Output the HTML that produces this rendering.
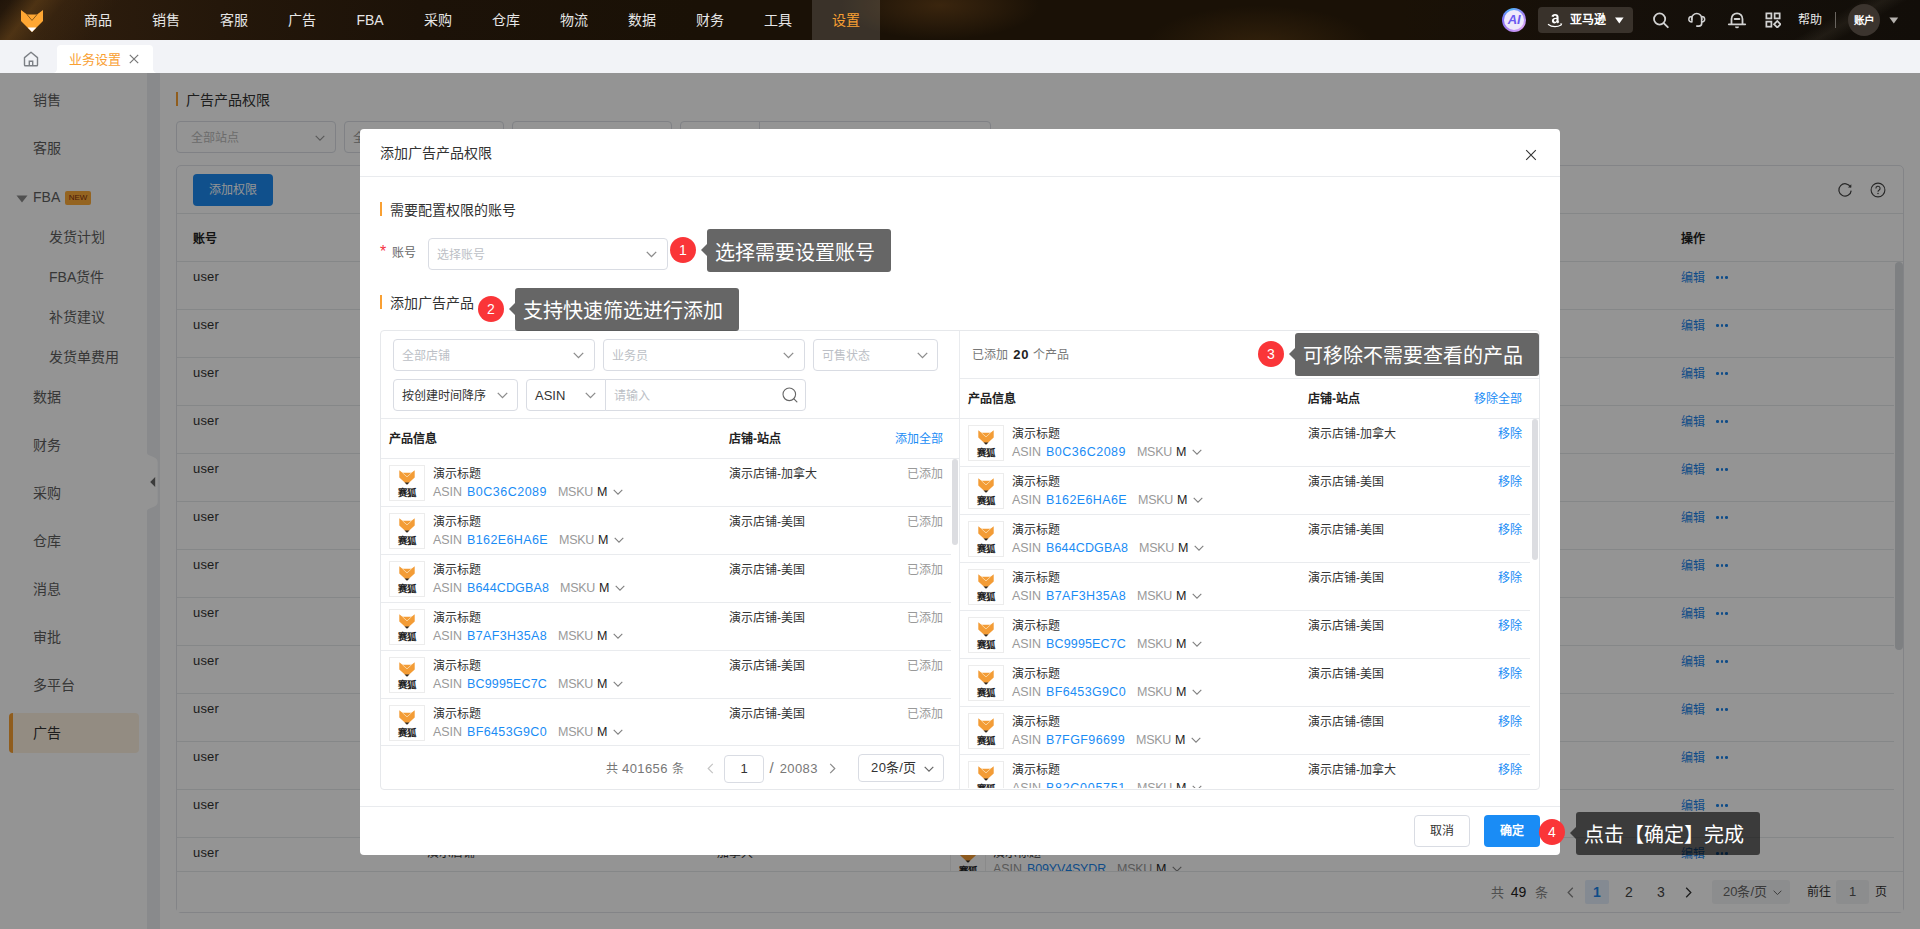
<!DOCTYPE html>
<html lang="zh-CN">
<head>
<meta charset="utf-8">
<title>业务设置</title>
<style>
*{box-sizing:border-box;margin:0;padding:0}
html,body{width:1920px;height:929px;overflow:hidden;background:#fff}
body{font-family:"Liberation Sans",sans-serif;font-size:12px;color:#333;position:relative}
svg{display:block}
.abs{position:absolute}
/* ---------- top nav ---------- */
#topnav{position:absolute;left:0;top:0;width:1920px;height:40px;background:linear-gradient(90deg,#2f1f0e 0,#2c1c0d 80px,#24170a 220px,#1c1208 420px,#1a1106 700px,#1a1106 1400px,#16100a 1600px,#120e09 1920px);overflow:hidden}
#topnav .glow1{position:absolute;left:0;top:0;width:140px;height:40px;background:linear-gradient(128deg,rgba(20,12,6,.55) 0,rgba(20,12,6,.35) 9px,rgba(110,72,26,.5) 30px,rgba(90,58,22,.22) 52px,rgba(60,40,16,0) 95px)}
#topnav .glow2{position:absolute;left:1130px;top:0;width:260px;height:40px;background:radial-gradient(ellipse at 50% 115%,rgba(70,46,16,.55) 0%,rgba(40,22,10,0) 62%)}
#topnav .glow3{position:absolute;left:840px;top:-20px;width:200px;height:60px;background:radial-gradient(ellipse at 50% 42%,rgba(66,42,16,.8) 0%,rgba(56,36,14,.55) 35%,rgba(40,22,10,0) 70%)}
#topnav .dark{display:none}
#topnav .streak{position:absolute;left:1740px;top:-30px;width:220px;height:100px;background:linear-gradient(150deg,rgba(255,255,255,0) 44%,rgba(255,235,200,.06) 50%,rgba(255,255,255,0) 56%)}
.nav-item{position:absolute;top:0;height:40px;width:68px;line-height:40px;text-align:center;font-size:14px;color:#e6e6e6;font-weight:500}
.nav-item.on{background:rgba(255,255,255,.14);color:#f9a033}
/* ---------- tab bar ---------- */
#tabbar{position:absolute;left:0;top:40px;width:1920px;height:33px;background:#f2f3f7}
#tab1{position:absolute;left:57px;top:5px;width:96px;height:28px;background:#fff;border-radius:4px 4px 0 0;color:#f9a033;font-size:13px;line-height:29px;padding-left:12px}
/* ---------- app (masked) ---------- */
#app{position:absolute;left:0;top:73px;width:1920px;height:856px;background:#f7f8fa;overflow:hidden}
#side{position:absolute;left:0;top:0;width:147px;height:856px;background:#fff}
#gap{position:absolute;left:147px;top:0;width:13px;height:856px;background:#eceef2}
.sm{position:absolute;left:33px;font-size:14px;color:#606060;line-height:20px;white-space:nowrap}
.sm.sub{left:49px}
#mask{position:absolute;left:0;top:73px;width:1920px;height:856px;background:rgba(0,0,0,.42)}
/* ---------- main ---------- */
#main{position:absolute;left:160px;top:0;width:1760px;height:856px;background:#fff}
.sel{position:absolute;height:32px;border:1px solid #dcdfe6;border-radius:4px;background:#fff;font-size:12px;line-height:32px;color:#bbb;padding-left:14px;white-space:nowrap;overflow:hidden}
#card{position:absolute;left:16px;top:92px;width:1728px;height:748px;border:1px solid #e2e4e8;border-radius:5px;background:#fff}
.hl{position:absolute;left:0;height:1px;background:#e6e8eb}
.u{position:absolute;left:16px;font-size:13px;color:#333;line-height:16px}
.ed{position:absolute;left:1504px;font-size:12px;color:#1a84ea;line-height:16px;white-space:nowrap}
.dots{position:absolute;left:1539px;width:12px;height:3px}
.dots i{position:absolute;top:0;width:2.600px;height:2.600px;border-radius:50%;background:#1a84ea}
/* ---------- modal ---------- */
#modal{position:absolute;left:360px;top:129px;width:1200px;height:726px;background:#fff;border-radius:4px}
.msel{position:absolute;height:32px;border:1px solid #d9dce3;border-radius:4px;background:#fff;font-size:12px;line-height:32px;color:#bcbfc6;padding-left:8px;white-space:nowrap}
.msel.v{color:#333}
.bar{position:absolute;left:20px;width:2px;height:14px;background:#f9a033}
.sec{position:absolute;left:30px;font-size:14px;line-height:20px;color:#333}
#panel{position:absolute;left:20px;top:201px;width:1160px;height:460px;border:1px solid #e6e8eb;border-radius:4px}
.pl{position:absolute;height:1px;background:#e9ebee}
.th{position:absolute;font-size:12px;font-weight:700;color:#222;line-height:16px;white-space:nowrap}
.lnk{color:#1a8cf5}
.row{position:absolute;height:48px}
.img{position:absolute;left:8px;top:6px;width:36px;height:36px;border:1px solid #ececec;background:#fff}
.t1{position:absolute;left:52px;top:7px;font-size:12px;line-height:16px;color:#333;white-space:nowrap}
.t2{position:absolute;left:52px;top:25px;font-size:13px;line-height:16px;color:#999;white-space:nowrap}
.t2 b{font-weight:400;color:#1a8cf5;margin-left:5px}
.t2 i{font-style:normal;margin-left:11px}
.t2 em{font-style:normal;color:#222;margin-left:4px}
.st{position:absolute;top:7px;font-size:12px;line-height:16px;color:#333;white-space:nowrap}
.ac{position:absolute;top:7px;font-size:12px;line-height:16px;white-space:nowrap;text-align:right}
/* ---------- guide ---------- */
.bd{position:absolute;width:26px;height:26px;border-radius:50%;background:#fa3538;color:#fff;font-size:14px;line-height:26px;text-align:center}
.tip{position:absolute;background:rgba(0,0,0,.6);border-radius:3px;color:#fff;font-size:20px;white-space:nowrap;padding-left:8px;overflow:visible}
.tip:before{content:"";position:absolute;left:-6px;top:50%;margin-top:-7px;border:6px solid transparent;border-left:0;border-right:6px solid rgba(0,0,0,.6)}
</style>
</head>
<body>
<svg width="0" height="0" style="position:absolute"><defs>
<g id="fox"><path d="M9.300 4.200 L12.400 6.700 L21.600 6.700 L24.700 4.200 L24.700 11.600 L17 18.600 L9.300 11.600 Z" fill="#f39c36"/><path d="M12.400 6.700 L17 10.900 L21.600 6.700" fill="none" stroke="#fbd9a8" stroke-width=".9"/><path d="M14.500 16.400 L19.500 16.400 L17 18.800 Z" fill="#2b2b2b"/><text x="17" y="30" text-anchor="middle" font-size="9.400" font-weight="700" fill="#222" font-family="'Liberation Sans',sans-serif" letter-spacing="-.3">赛狐</text></g>
</defs></svg>
<div id="topnav">
  <div class="glow1"></div><div class="glow2"></div><div class="glow3"></div><div class="streak"></div>
  <svg class="abs" style="left:18px;top:6px" width="28" height="28" viewBox="0 0 28 28"><path d="M3 4 L9 8.600 L19 8.600 L25 4 L25 15 L14 26 L3 15 Z" fill="#ffa733"/><path d="M9 8.600 L14 14.400 L19 8.600" fill="none" stroke="#6b4514" stroke-width="0.8"/><path d="M9.600 21.600 L18.400 21.600 L14 26 Z" fill="#fff"/></svg>
  <div class="nav-item" style="left:64px">商品</div><div class="nav-item" style="left:132px">销售</div><div class="nav-item" style="left:200px">客服</div><div class="nav-item" style="left:268px">广告</div><div class="nav-item" style="left:336px">FBA</div><div class="nav-item" style="left:404px">采购</div><div class="nav-item" style="left:472px">仓库</div><div class="nav-item" style="left:540px">物流</div><div class="nav-item" style="left:608px">数据</div><div class="nav-item" style="left:676px">财务</div><div class="nav-item" style="left:744px">工具</div><div class="nav-item on" style="left:812px">设置</div>
  <div class="abs" style="left:1502px;top:8px;width:24px;height:24px;border-radius:50%;background:conic-gradient(from 200deg,#b98cf5,#7f6cf6,#4fb4fa,#9d83f7,#d9a3f5,#b98cf5)"></div>
  <div class="abs" style="left:1504px;top:10px;width:20px;height:20px;border-radius:50%;background:#eee9fb"></div>
  <div class="abs" style="left:1502px;top:8px;width:24px;height:24px;line-height:24px;text-align:center;font-size:13px;font-weight:700;font-style:italic;color:#6a5af0;letter-spacing:-0.3px">AI</div>
  <div class="abs" style="left:1538px;top:7px;width:95px;height:26px;border-radius:4px;background:#39322b"></div>
  <svg class="abs" style="left:1547px;top:12px" width="16" height="16" viewBox="0 0 16 16"><path d="M9.500 5.800c-1.700.100-4.600.500-4.600 3.100 0 1.600 1.200 2.500 2.500 2.500 1.100 0 1.800-.400 2.400-1.100.300.500.400.700.900 1.100l1.600-1.300c-.4-.5-.7-.9-.7-1.800V4.900c0-1.800-1.300-3-3.500-3-2.100 0-3.400 1.100-3.600 2.700l2.200.3c.1-.8.600-1.200 1.400-1.200.8 0 1.400.4 1.400 1.300zm0 2.100c0 1.100-.7 1.800-1.500 1.800-.6 0-1-.4-1-1.100 0-1.300 1.200-1.600 2.500-1.600z" fill="#fff"/><path d="M1 12.200c2 1.600 4.500 2.400 7 2.400 2.100 0 4.300-.6 6-1.700" fill="none" stroke="#fff" stroke-width="1.200"/><path d="M13 12.100l1.800-.3-.7 1.700" fill="none" stroke="#fff" stroke-width=".9"/></svg>
  <div class="abs" style="left:1570px;top:7px;height:26px;line-height:26px;font-size:12px;font-weight:700;color:#fff">亚马逊</div>
  <svg class="abs" style="left:1615px;top:17px" width="9" height="7" viewBox="0 0 9 7"><path d="M0 .5h8.600L4.300 6.500z" fill="#fff"/></svg>
  <svg class="abs" style="left:1650px;top:10px" width="21" height="21" viewBox="0 0 21 21"><circle cx="9.600" cy="9" r="5.600" fill="none" stroke="#d2d2d2" stroke-width="1.800"/><path d="M13.700 13.100L17.800 17.200" stroke="#d2d2d2" stroke-width="1.900" stroke-linecap="round"/></svg>
  <svg class="abs" style="left:1687px;top:11px" width="19.500" height="17.700" viewBox="0 0 22 20"><path d="M5.300 10.500V8.500a5.700 5.700 0 0 1 11.400 0v2" fill="none" stroke="#d2d2d2" stroke-width="1.800"/><path d="M5.600 6.300C3.400 6.300 2 7.700 2 9.400s1.400 3.100 3.600 3.100z" fill="none" stroke="#d2d2d2" stroke-width="1.600" stroke-linejoin="round"/><path d="M16.400 6.300c2.200 0 3.600 1.400 3.600 3.100s-1.400 3.100-3.600 3.100z" fill="none" stroke="#d2d2d2" stroke-width="1.600" stroke-linejoin="round"/><path d="M16.600 12.500v1.300c0 2-1.300 3.300-3.300 3.300H11" fill="none" stroke="#d2d2d2" stroke-width="1.800" stroke-linecap="round"/></svg>
  <svg class="abs" style="left:1727px;top:11px" width="20" height="18" viewBox="0 0 20 18"><path d="M4.500 13V8a5.500 5.700 0 0 1 11 0v5" fill="none" stroke="#d2d2d2" stroke-width="1.800"/><path d="M1.800 13.300h16.400" stroke="#d2d2d2" stroke-width="1.800" stroke-linecap="round"/><path d="M7.600 8h4.800" stroke="#d2d2d2" stroke-width="1.800" stroke-linecap="round"/><path d="M8 15.400a2 1.900 0 0 0 4 0z" fill="#d2d2d2"/></svg>
  <svg class="abs" style="left:1764.500px;top:11.500px" width="16.500" height="16.500" viewBox="0 0 18 18"><rect x="1.500" y="1.500" width="5.500" height="5.500" fill="none" stroke="#d2d2d2" stroke-width="1.900"/><rect x="10.500" y="1.500" width="5.500" height="5.500" fill="none" stroke="#d2d2d2" stroke-width="1.900"/><rect x="1.500" y="10.500" width="5.500" height="5.500" fill="none" stroke="#d2d2d2" stroke-width="1.900"/><rect x="10.900" y="10.900" width="5" height="5" transform="rotate(45 13.400 13.400)" fill="none" stroke="#d2d2d2" stroke-width="1.900"/></svg>
  <div class="abs" style="left:1798px;top:0;height:40px;line-height:41px;font-size:12px;color:#e8e8e8;font-weight:500">帮助</div>
  <div class="abs" style="left:1835px;top:12px;width:1px;height:16px;background:#6a6560"></div>
  <div class="abs" style="left:1848px;top:4px;width:32px;height:32px;border-radius:50%;background:#3b342e;color:#fff;font-size:10.500px;font-weight:700;text-align:center;line-height:33px">账户</div>
  <svg class="abs" style="left:1889px;top:17px" width="10" height="7" viewBox="0 0 10 7"><path d="M.4.400h8.800L4.800 6.400z" fill="#b5b2ae"/></svg>
</div>
<div id="tabbar">
  <svg class="abs" style="left:22px;top:10px" width="18" height="18" viewBox="0 0 18 18"><path d="M2.500 7.600L9 2.300l6.500 5.300V15a.8.800 0 0 1-.8.800H3.300a.8.800 0 0 1-.8-.8z" fill="none" stroke="#7d8086" stroke-width="1.400" stroke-linejoin="round"/><path d="M7.300 15.600v-4.400h3.400v4.400" fill="none" stroke="#7d8086" stroke-width="1.400"/></svg>
  <div id="tab1">业务设置</div>
  <div class="abs" style="left:53px;top:29px;width:4px;height:4px;background:radial-gradient(circle at 0 0,rgba(255,255,255,0) 3.500px,#fff 4.200px)"></div>
  <div class="abs" style="left:153px;top:29px;width:4px;height:4px;background:radial-gradient(circle at 100% 0,rgba(255,255,255,0) 3.500px,#fff 4.200px)"></div>
  <svg class="abs" style="left:128px;top:13px" width="12" height="12" viewBox="0 0 12 12"><path d="M1.800 1.800l8.400 8.400M10.200 1.800l-8.400 8.400" stroke="#777" stroke-width="1.200"/></svg>
</div>
<div id="app">
  <div id="side">
    <div class="abs" style="left:9px;top:640px;width:130px;height:40px;border-radius:4px;background:#fdf1e1"></div><div class="abs" style="left:9px;top:640px;width:4px;height:40px;border-radius:4px 0 0 4px;background:#f9a033"></div>
    <div class="sm" style="top:17px">销售</div>
    <div class="sm" style="top:65px">客服</div>
    <div class="sm" style="top:114px">FBA</div>
    <div class="sm sub" style="top:154px">发货计划</div>
    <div class="sm sub" style="top:194px">FBA货件</div>
    <div class="sm sub" style="top:234px">补货建议</div>
    <div class="sm sub" style="top:274px">发货单费用</div>
    <div class="sm" style="top:314px">数据</div>
    <div class="sm" style="top:362px">财务</div>
    <div class="sm" style="top:410px">采购</div>
    <div class="sm" style="top:458px">仓库</div>
    <div class="sm" style="top:506px">消息</div>
    <div class="sm" style="top:554px">审批</div>
    <div class="sm" style="top:602px">多平台</div>
    <div class="sm" style="top:650px;color:#333">广告</div>
    <svg class="abs" style="left:16px;top:122px" width="12" height="8" viewBox="0 0 12 8"><path d="M.5.500h11L6 7.500z" fill="#8a8a8a"/></svg>
    <div class="abs" style="left:65px;top:118px;width:26px;height:14px;border-radius:2px;background:#ffad3a;color:#86300a;font-size:8px;line-height:14.500px;text-align:center;font-weight:500;letter-spacing:-.1px">NEW</div>
  </div>
  <div id="gap"><svg class="abs" style="left:0;top:380px" width="11" height="58" viewBox="0 0 11 58"><path d="M0 0 C0 3.500 10.700 3 10.700 9 L10.700 49 C10.700 55 0 54.500 0 58 Z" fill="#fff"/></svg><svg class="abs" style="left:3px;top:404px" width="6" height="10" viewBox="0 0 6 10"><path d="M5.200 0v10L.2 5z" fill="#666"/></svg></div>
  <div id="main">
    <div class="abs" style="left:16px;top:19px;width:2px;height:14px;background:#f9a033"></div>
    <div class="abs" style="left:26px;top:17px;font-size:14px;line-height:20px;color:#333">广告产品权限</div>
    <div class="sel" style="left:16px;top:48px;width:160px">全部站点</div><svg class="abs" style="left:155px;top:62px" width="10" height="6.0" viewBox="0 0 10 6"><path d="M.7.800L5 5.100l4.300-4.300" fill="none" stroke="#999" stroke-width="1.1"/></svg>
    <div class="sel" style="left:184px;top:48px;width:160px;padding-left:8px;color:#999">全部店铺</div>
    <div class="sel" style="left:352px;top:48px;width:160px"></div>
    <div class="sel" style="left:520px;top:48px;width:311px"></div>
    <div class="abs" style="left:599px;top:49px;width:1px;height:30px;background:#dcdfe6"></div>
    <div id="card">
      <div class="abs" style="left:16px;top:8px;width:80px;height:32px;border-radius:4px;background:#1c8bf2;color:#fff;font-size:12px;line-height:32px;text-align:center">添加权限</div>
      <svg class="abs" style="left:1660px;top:16px" width="16" height="16" viewBox="0 0 16 16"><path d="M13.600 5.200A6.200 6.200 0 1 0 14.200 8.600" fill="none" stroke="#444" stroke-width="1.200"/><path d="M14.300 2.200v3.400h-3.400z" fill="#444"/></svg>
      <svg class="abs" style="left:1693px;top:16px" width="16" height="16" viewBox="0 0 16 16"><circle cx="8" cy="8" r="6.900" fill="none" stroke="#444" stroke-width="1.100"/><path d="M5.900 6.400a2.100 2.100 0 1 1 3.100 1.800c-.7.400-1 .8-1 1.500" fill="none" stroke="#444" stroke-width="1.100"/><circle cx="8" cy="11.500" r=".75" fill="#444"/></svg>
      <div class="hl" style="top:47px;width:1726px"></div>
      <div class="abs" style="left:16px;top:64.500px;font-size:12px;font-weight:700;color:#222;line-height:16px">账号</div>
      <div class="abs" style="left:1504px;top:64.500px;font-size:12px;font-weight:700;color:#222;line-height:16px">操作</div>
      <div class="hl" style="top:95px;width:1726px"></div>
      <div class="u" style="top:103px"><span style="font-size:13px;letter-spacing:0.18px;">user</span></div><div class="ed" style="top:103.5px">编辑</div><div class="dots" style="top:110px"><i style="left:0"></i><i style="left:4.700px"></i><i style="left:9.400px"></i></div><div class="hl" style="top:143px;width:1717px"></div>
      <div class="u" style="top:151px"><span style="font-size:13px;letter-spacing:0.18px;">user</span></div><div class="ed" style="top:151.5px">编辑</div><div class="dots" style="top:158px"><i style="left:0"></i><i style="left:4.700px"></i><i style="left:9.400px"></i></div><div class="hl" style="top:191px;width:1717px"></div>
      <div class="u" style="top:199px"><span style="font-size:13px;letter-spacing:0.18px;">user</span></div><div class="ed" style="top:199.5px">编辑</div><div class="dots" style="top:206px"><i style="left:0"></i><i style="left:4.700px"></i><i style="left:9.400px"></i></div><div class="hl" style="top:239px;width:1717px"></div>
      <div class="u" style="top:247px"><span style="font-size:13px;letter-spacing:0.18px;">user</span></div><div class="ed" style="top:247.5px">编辑</div><div class="dots" style="top:254px"><i style="left:0"></i><i style="left:4.700px"></i><i style="left:9.400px"></i></div><div class="hl" style="top:287px;width:1717px"></div>
      <div class="u" style="top:295px"><span style="font-size:13px;letter-spacing:0.18px;">user</span></div><div class="ed" style="top:295.5px">编辑</div><div class="dots" style="top:302px"><i style="left:0"></i><i style="left:4.700px"></i><i style="left:9.400px"></i></div><div class="hl" style="top:335px;width:1717px"></div>
      <div class="u" style="top:343px"><span style="font-size:13px;letter-spacing:0.18px;">user</span></div><div class="ed" style="top:343.5px">编辑</div><div class="dots" style="top:350px"><i style="left:0"></i><i style="left:4.700px"></i><i style="left:9.400px"></i></div><div class="hl" style="top:383px;width:1717px"></div>
      <div class="u" style="top:391px"><span style="font-size:13px;letter-spacing:0.18px;">user</span></div><div class="ed" style="top:391.5px">编辑</div><div class="dots" style="top:398px"><i style="left:0"></i><i style="left:4.700px"></i><i style="left:9.400px"></i></div><div class="hl" style="top:431px;width:1717px"></div>
      <div class="u" style="top:439px"><span style="font-size:13px;letter-spacing:0.18px;">user</span></div><div class="ed" style="top:439.5px">编辑</div><div class="dots" style="top:446px"><i style="left:0"></i><i style="left:4.700px"></i><i style="left:9.400px"></i></div><div class="hl" style="top:479px;width:1717px"></div>
      <div class="u" style="top:487px"><span style="font-size:13px;letter-spacing:0.18px;">user</span></div><div class="ed" style="top:487.5px">编辑</div><div class="dots" style="top:494px"><i style="left:0"></i><i style="left:4.700px"></i><i style="left:9.400px"></i></div><div class="hl" style="top:527px;width:1717px"></div>
      <div class="u" style="top:535px"><span style="font-size:13px;letter-spacing:0.18px;">user</span></div><div class="ed" style="top:535.5px">编辑</div><div class="dots" style="top:542px"><i style="left:0"></i><i style="left:4.700px"></i><i style="left:9.400px"></i></div><div class="hl" style="top:575px;width:1717px"></div>
      <div class="u" style="top:583px"><span style="font-size:13px;letter-spacing:0.18px;">user</span></div><div class="ed" style="top:583.5px">编辑</div><div class="dots" style="top:590px"><i style="left:0"></i><i style="left:4.700px"></i><i style="left:9.400px"></i></div><div class="hl" style="top:623px;width:1717px"></div>
      <div class="u" style="top:631px"><span style="font-size:13px;letter-spacing:0.18px;">user</span></div><div class="ed" style="top:631.5px">编辑</div><div class="dots" style="top:638px"><i style="left:0"></i><i style="left:4.700px"></i><i style="left:9.400px"></i></div><div class="hl" style="top:671px;width:1717px"></div>
      <div class="u" style="top:679px"><span style="font-size:13px;letter-spacing:0.18px;">user</span></div><div class="ed" style="top:679.5px">编辑</div><div class="dots" style="top:686px"><i style="left:0"></i><i style="left:4.700px"></i><i style="left:9.400px"></i></div>
      <div class="abs" style="left:250px;top:679px;font-size:12px;color:#333;line-height:16px">演示店铺</div>
      <div class="abs" style="left:540px;top:679px;font-size:12px;color:#333;line-height:16px">加拿大</div>
      <div class="abs" style="left:773px;top:677px;width:36px;height:28px;border:1px solid #eee;border-bottom:0;overflow:hidden"><svg width="34" height="34" viewBox="0 0 34 34"><use href="#fox"/></svg></div>
      <div class="abs" style="left:816px;top:679px;font-size:12px;color:#333;line-height:16px">演示标题</div>
      <div class="abs" style="left:816px;top:695px;font-size:13px;color:#999;line-height:16px;height:10px;overflow:hidden;white-space:nowrap"><span style="font-size:12.5px;letter-spacing:-0.04px;">ASIN</span><span style="color:#1a84ea;margin-left:5px"><span style="font-size:12.5px;letter-spacing:-0.16px;">B09YV4SYDR</span></span><span style="margin-left:11px"><span style="font-size:12.5px;letter-spacing:-0.28px;">MSKU</span></span><span style="color:#222;margin-left:4px"><span style="font-size:12.5px;letter-spacing:-0.41px;">M</span></span><svg style="display:inline-block;margin-left:6px;vertical-align:1px" width="10" height="6" viewBox="0 0 10 6"><path d="M.7.800L5 5.100l4.300-4.300" fill="none" stroke="#808080" stroke-width="1.100"/></svg></div>
      <div class="abs" style="left:0;top:705px;width:1726px;height:41px;background:#fff"></div>
      <div class="hl" style="top:705px;width:1726px"></div>
      <div class="abs" style="left:1718px;top:96px;width:8px;height:388px;border-radius:4px;background:#d9dce1"></div>
      <div class="abs" style="left:1314px;top:718px;font-size:13px;color:#888;line-height:16px;white-space:nowrap">共 <span style="color:#222;margin:0 5px 0 3px"><span style="font-size:14px;letter-spacing:0.21px;">49</span></span> 条</div>
      <svg class="abs" style="left:1390px;top:721px" width="7" height="11" viewBox="0 0 7 11"><path d="M5.800.800L1.200 5.500l4.600 4.700" fill="none" stroke="#888" stroke-width="1.300"/></svg>
      <div class="abs" style="left:1408px;top:714px;width:24px;height:24px;background:#e3eefb;border-radius:2px;color:#1a84ea;font-size:14px;font-weight:700;line-height:24px;text-align:center">1</div>
      <div class="abs" style="left:1440px;top:714px;width:24px;height:24px;color:#444;font-size:14px;line-height:24px;text-align:center">2</div>
      <div class="abs" style="left:1472px;top:714px;width:24px;height:24px;color:#444;font-size:14px;line-height:24px;text-align:center">3</div>
      <svg class="abs" style="left:1508px;top:721px" width="7" height="11" viewBox="0 0 7 11"><path d="M1.200.800L5.800 5.500l-4.600 4.700" fill="none" stroke="#333" stroke-width="1.300"/></svg>
      <div class="abs" style="left:1535px;top:714px;width:78px;height:24px;background:#f2f3f5;border-radius:3px;color:#666;font-size:13px;line-height:24px;padding-left:11px">20条/页</div>
      <svg class="abs" style="left:1596px;top:724px" width="9" height="5.4" viewBox="0 0 10 6"><path d="M.7.800L5 5.100l4.300-4.300" fill="none" stroke="#666" stroke-width="1.1"/></svg>
      <div class="abs" style="left:1630px;top:714px;font-size:12px;color:#333;line-height:24px">前往</div>
      <div class="abs" style="left:1659px;top:714px;width:33px;height:24px;background:#f2f3f5;border-radius:3px;color:#555;font-size:13px;line-height:24px;text-align:center">1</div>
      <div class="abs" style="left:1698px;top:714px;font-size:12px;color:#333;line-height:24px">页</div>
    </div>
  </div>
</div>
<div id="mask"></div>
<div id="modal">
  <div class="abs" style="left:20px;top:14px;font-size:14px;line-height:20px;color:#333">添加广告产品权限</div>
  <svg class="abs" style="left:1165px;top:20px" width="12" height="12" viewBox="0 0 12 12"><path d="M1.200 1.200l9.600 9.600M10.800 1.200l-9.600 9.600" stroke="#333" stroke-width="1.100"/></svg>
  <div class="pl" style="left:0;top:47px;width:1200px"></div>
  <div class="bar" style="top:73px"></div><div class="sec" style="top:71px">需要配置权限的账号</div>
  <div class="abs" style="left:20px;top:115px;font-size:16px;color:#f5333f;line-height:16px">*</div>
  <div class="abs" style="left:32px;top:116px;font-size:12px;color:#666;line-height:16px">账号</div>
  <div class="msel" style="left:68px;top:109px;width:240px">选择账号</div><svg class="abs" style="left:286px;top:122px" width="11" height="6.6" viewBox="0 0 10 6"><path d="M.7.800L5 5.100l4.300-4.300" fill="none" stroke="#8c8c8c" stroke-width="1.2"/></svg>
  <div class="bar" style="top:166px"></div><div class="sec" style="top:164px">添加广告产品</div>
  <div id="panel">
    <div class="abs" style="left:0;top:1px;width:578px;height:456px;overflow:hidden"><div class="msel" style="left:12px;top:7px;width:202px">全部店铺</div><svg class="abs" style="left:192px;top:20px" width="11" height="6.6" viewBox="0 0 10 6"><path d="M.7.800L5 5.100l4.300-4.300" fill="none" stroke="#8c8c8c" stroke-width="1.2"/></svg><div class="msel" style="left:222px;top:7px;width:202px">业务员</div><svg class="abs" style="left:402px;top:20px" width="11" height="6.6" viewBox="0 0 10 6"><path d="M.7.800L5 5.100l4.300-4.300" fill="none" stroke="#8c8c8c" stroke-width="1.2"/></svg><div class="msel" style="left:432px;top:7px;width:125px">可售状态</div><svg class="abs" style="left:536px;top:20px" width="11" height="6.6" viewBox="0 0 10 6"><path d="M.7.800L5 5.100l4.300-4.300" fill="none" stroke="#8c8c8c" stroke-width="1.2"/></svg><div class="msel v" style="left:12px;top:47px;width:125px">按创建时间降序</div><svg class="abs" style="left:116px;top:60px" width="11" height="6.6" viewBox="0 0 10 6"><path d="M.7.800L5 5.100l4.300-4.300" fill="none" stroke="#8c8c8c" stroke-width="1.2"/></svg><div class="msel v" style="left:145px;top:47px;width:80px;border-radius:4px 0 0 4px;font-size:13px">ASIN</div><svg class="abs" style="left:204px;top:60px" width="11" height="6.6" viewBox="0 0 10 6"><path d="M.7.800L5 5.100l4.300-4.300" fill="none" stroke="#8c8c8c" stroke-width="1.2"/></svg><div class="msel" style="left:224px;top:47px;width:201px;border-radius:0 4px 4px 0">请输入</div><svg class="abs" style="left:400px;top:54px" width="18" height="18" viewBox="0 0 18 18"><circle cx="8.300" cy="8.300" r="6.300" fill="none" stroke="#666" stroke-width="1.100"/><path d="M12.900 12.900l3 3" stroke="#666" stroke-width="1.200" stroke-linecap="round"/></svg><div class="pl" style="left:0;top:86px;width:578px"></div><div class="th" style="left:8px;top:99px">产品信息</div><div class="th" style="left:348px;top:99px">店铺-站点</div><div class="th lnk" style="right:16px;top:99px;font-weight:400">添加全部</div><div class="pl" style="left:0;top:126px;width:578px"></div>
<div class="row" style="left:0;top:127px;width:570px"><div class="img"><svg width="34" height="34" viewBox="0 0 34 34"><use href="#fox"/></svg></div><div class="t1">演示标题</div><div class="t2"><span style="font-size:12.5px;letter-spacing:-0.04px;">ASIN</span><b><span style="font-size:12.5px;letter-spacing:0.49px;">B0C36C2089</span></b><i><span style="font-size:12.5px;letter-spacing:-0.28px;">MSKU</span></i><em><span style="font-size:12.5px;letter-spacing:-0.41px;">M</span></em><svg style="display:inline-block;margin-left:6px;vertical-align:1px" width="10" height="6" viewBox="0 0 10 6"><path d="M.7.800L5 5.100l4.300-4.300" fill="none" stroke="#808080" stroke-width="1.100"/></svg></div><div class="st" style="left:348px">演示店铺-加拿大</div><div class="ac" style="right:8px;color:#999">已添加</div><div class="pl" style="left:0;top:47px;width:570px"></div></div>
<div class="row" style="left:0;top:175px;width:570px"><div class="img"><svg width="34" height="34" viewBox="0 0 34 34"><use href="#fox"/></svg></div><div class="t1">演示标题</div><div class="t2"><span style="font-size:12.5px;letter-spacing:-0.04px;">ASIN</span><b><span style="font-size:12.5px;letter-spacing:0.39px;">B162E6HA6E</span></b><i><span style="font-size:12.5px;letter-spacing:-0.28px;">MSKU</span></i><em><span style="font-size:12.5px;letter-spacing:-0.41px;">M</span></em><svg style="display:inline-block;margin-left:6px;vertical-align:1px" width="10" height="6" viewBox="0 0 10 6"><path d="M.7.800L5 5.100l4.300-4.300" fill="none" stroke="#808080" stroke-width="1.100"/></svg></div><div class="st" style="left:348px">演示店铺-美国</div><div class="ac" style="right:8px;color:#999">已添加</div><div class="pl" style="left:0;top:47px;width:570px"></div></div>
<div class="row" style="left:0;top:223px;width:570px"><div class="img"><svg width="34" height="34" viewBox="0 0 34 34"><use href="#fox"/></svg></div><div class="t1">演示标题</div><div class="t2"><span style="font-size:12.5px;letter-spacing:-0.04px;">ASIN</span><b><span style="font-size:12.5px;letter-spacing:0.14px;">B644CDGBA8</span></b><i><span style="font-size:12.5px;letter-spacing:-0.28px;">MSKU</span></i><em><span style="font-size:12.5px;letter-spacing:-0.41px;">M</span></em><svg style="display:inline-block;margin-left:6px;vertical-align:1px" width="10" height="6" viewBox="0 0 10 6"><path d="M.7.800L5 5.100l4.300-4.300" fill="none" stroke="#808080" stroke-width="1.100"/></svg></div><div class="st" style="left:348px">演示店铺-美国</div><div class="ac" style="right:8px;color:#999">已添加</div><div class="pl" style="left:0;top:47px;width:570px"></div></div>
<div class="row" style="left:0;top:271px;width:570px"><div class="img"><svg width="34" height="34" viewBox="0 0 34 34"><use href="#fox"/></svg></div><div class="t1">演示标题</div><div class="t2"><span style="font-size:12.5px;letter-spacing:-0.04px;">ASIN</span><b><span style="font-size:12.5px;letter-spacing:0.36px;">B7AF3H35A8</span></b><i><span style="font-size:12.5px;letter-spacing:-0.28px;">MSKU</span></i><em><span style="font-size:12.5px;letter-spacing:-0.41px;">M</span></em><svg style="display:inline-block;margin-left:6px;vertical-align:1px" width="10" height="6" viewBox="0 0 10 6"><path d="M.7.800L5 5.100l4.300-4.300" fill="none" stroke="#808080" stroke-width="1.100"/></svg></div><div class="st" style="left:348px">演示店铺-美国</div><div class="ac" style="right:8px;color:#999">已添加</div><div class="pl" style="left:0;top:47px;width:570px"></div></div>
<div class="row" style="left:0;top:319px;width:570px"><div class="img"><svg width="34" height="34" viewBox="0 0 34 34"><use href="#fox"/></svg></div><div class="t1">演示标题</div><div class="t2"><span style="font-size:12.5px;letter-spacing:-0.04px;">ASIN</span><b><span style="font-size:12.5px;letter-spacing:0.15px;">BC9995EC7C</span></b><i><span style="font-size:12.5px;letter-spacing:-0.28px;">MSKU</span></i><em><span style="font-size:12.5px;letter-spacing:-0.41px;">M</span></em><svg style="display:inline-block;margin-left:6px;vertical-align:1px" width="10" height="6" viewBox="0 0 10 6"><path d="M.7.800L5 5.100l4.300-4.300" fill="none" stroke="#808080" stroke-width="1.100"/></svg></div><div class="st" style="left:348px">演示店铺-美国</div><div class="ac" style="right:8px;color:#999">已添加</div><div class="pl" style="left:0;top:47px;width:570px"></div></div>
<div class="row" style="left:0;top:367px;width:570px"><div class="img"><svg width="34" height="34" viewBox="0 0 34 34"><use href="#fox"/></svg></div><div class="t1">演示标题</div><div class="t2"><span style="font-size:12.5px;letter-spacing:-0.04px;">ASIN</span><b><span style="font-size:12.5px;letter-spacing:0.36px;">BF6453G9C0</span></b><i><span style="font-size:12.5px;letter-spacing:-0.28px;">MSKU</span></i><em><span style="font-size:12.5px;letter-spacing:-0.41px;">M</span></em><svg style="display:inline-block;margin-left:6px;vertical-align:1px" width="10" height="6" viewBox="0 0 10 6"><path d="M.7.800L5 5.100l4.300-4.300" fill="none" stroke="#808080" stroke-width="1.100"/></svg></div><div class="st" style="left:348px">演示店铺-美国</div><div class="ac" style="right:8px;color:#999">已添加</div><div class="pl" style="left:0;top:47px;width:0px"></div></div>
<div class="pl" style="left:0;top:413px;width:578px"></div><div class="abs" style="left:571px;top:127px;width:6px;height:86px;border-radius:3px;background:#dcdde1"></div><div class="abs" style="left:225px;top:429px;font-size:12px;line-height:16px;color:#777;white-space:nowrap">共<span style="margin:0 4px"><span style="font-size:13px;letter-spacing:0.40px;">401656</span></span>条</div><svg class="abs" style="left:326px;top:431px" width="7" height="11" viewBox="0 0 7 11"><path d="M5.800.800L1.200 5.500l4.600 4.700" fill="none" stroke="#c4c4c4" stroke-width="1.200"/></svg><div class="abs" style="left:343px;top:423px;width:40px;height:28px;border:1px solid #d9dce3;border-radius:4px;font-size:13px;line-height:26px;text-align:center;color:#333">1</div><div class="abs" style="left:388.500px;top:428px;font-size:13px;line-height:16px;color:#777;white-space:nowrap"><span style="font-size:15px">/</span><span style="margin-left:6px"><span style="font-size:13px;letter-spacing:0.40px;">20083</span></span></div><svg class="abs" style="left:448px;top:431px" width="7" height="11" viewBox="0 0 7 11"><path d="M1.200.800L5.800 5.500l-4.600 4.700" fill="none" stroke="#8a8a8a" stroke-width="1.200"/></svg><div class="abs" style="left:477px;top:422px;width:86px;height:28px;border:1px solid #d9dce3;border-radius:4px;font-size:13px;line-height:26px;padding-left:12px;color:#333"><span style="font-size:13px;letter-spacing:0.40px;">20</span>条/页</div><svg class="abs" style="left:543px;top:434px" width="10" height="6.0" viewBox="0 0 10 6"><path d="M.7.800L5 5.100l4.300-4.300" fill="none" stroke="#666" stroke-width="1.2"/></svg></div>
    <div class="abs" style="left:578px;top:0;width:1px;height:458px;background:#e9ebee"></div>
    <div class="abs" style="left:579px;top:1px;width:579px;height:456px;overflow:hidden"><div class="abs" style="left:12px;top:15px;font-size:12px;line-height:16px;color:#777;white-space:nowrap">已添加 <span style="color:#222;font-weight:700;margin:0 0 0 2px"><span style="font-size:13px;letter-spacing:0.77px;">20</span></span> 个产品</div><div class="pl" style="left:0;top:46px;width:580px"></div><div class="th" style="left:8px;top:59px">产品信息</div><div class="th" style="left:348px;top:59px">店铺-站点</div><div class="th lnk" style="right:17px;top:59px;font-weight:400">移除全部</div><div class="pl" style="left:0;top:86px;width:580px"></div>
<div class="row" style="left:0;top:87px;width:570px"><div class="img"><svg width="34" height="34" viewBox="0 0 34 34"><use href="#fox"/></svg></div><div class="t1">演示标题</div><div class="t2"><span style="font-size:12.5px;letter-spacing:-0.04px;">ASIN</span><b><span style="font-size:12.5px;letter-spacing:0.49px;">B0C36C2089</span></b><i><span style="font-size:12.5px;letter-spacing:-0.28px;">MSKU</span></i><em><span style="font-size:12.5px;letter-spacing:-0.41px;">M</span></em><svg style="display:inline-block;margin-left:6px;vertical-align:1px" width="10" height="6" viewBox="0 0 10 6"><path d="M.7.800L5 5.100l4.300-4.300" fill="none" stroke="#808080" stroke-width="1.100"/></svg></div><div class="st" style="left:348px">演示店铺-加拿大</div><div class="ac" style="right:8px;color:#1a8cf5">移除</div><div class="pl" style="left:0;top:47px;width:570px"></div></div>
<div class="row" style="left:0;top:135px;width:570px"><div class="img"><svg width="34" height="34" viewBox="0 0 34 34"><use href="#fox"/></svg></div><div class="t1">演示标题</div><div class="t2"><span style="font-size:12.5px;letter-spacing:-0.04px;">ASIN</span><b><span style="font-size:12.5px;letter-spacing:0.39px;">B162E6HA6E</span></b><i><span style="font-size:12.5px;letter-spacing:-0.28px;">MSKU</span></i><em><span style="font-size:12.5px;letter-spacing:-0.41px;">M</span></em><svg style="display:inline-block;margin-left:6px;vertical-align:1px" width="10" height="6" viewBox="0 0 10 6"><path d="M.7.800L5 5.100l4.300-4.300" fill="none" stroke="#808080" stroke-width="1.100"/></svg></div><div class="st" style="left:348px">演示店铺-美国</div><div class="ac" style="right:8px;color:#1a8cf5">移除</div><div class="pl" style="left:0;top:47px;width:570px"></div></div>
<div class="row" style="left:0;top:183px;width:570px"><div class="img"><svg width="34" height="34" viewBox="0 0 34 34"><use href="#fox"/></svg></div><div class="t1">演示标题</div><div class="t2"><span style="font-size:12.5px;letter-spacing:-0.04px;">ASIN</span><b><span style="font-size:12.5px;letter-spacing:0.14px;">B644CDGBA8</span></b><i><span style="font-size:12.5px;letter-spacing:-0.28px;">MSKU</span></i><em><span style="font-size:12.5px;letter-spacing:-0.41px;">M</span></em><svg style="display:inline-block;margin-left:6px;vertical-align:1px" width="10" height="6" viewBox="0 0 10 6"><path d="M.7.800L5 5.100l4.300-4.300" fill="none" stroke="#808080" stroke-width="1.100"/></svg></div><div class="st" style="left:348px">演示店铺-美国</div><div class="ac" style="right:8px;color:#1a8cf5">移除</div><div class="pl" style="left:0;top:47px;width:570px"></div></div>
<div class="row" style="left:0;top:231px;width:570px"><div class="img"><svg width="34" height="34" viewBox="0 0 34 34"><use href="#fox"/></svg></div><div class="t1">演示标题</div><div class="t2"><span style="font-size:12.5px;letter-spacing:-0.04px;">ASIN</span><b><span style="font-size:12.5px;letter-spacing:0.36px;">B7AF3H35A8</span></b><i><span style="font-size:12.5px;letter-spacing:-0.28px;">MSKU</span></i><em><span style="font-size:12.5px;letter-spacing:-0.41px;">M</span></em><svg style="display:inline-block;margin-left:6px;vertical-align:1px" width="10" height="6" viewBox="0 0 10 6"><path d="M.7.800L5 5.100l4.300-4.300" fill="none" stroke="#808080" stroke-width="1.100"/></svg></div><div class="st" style="left:348px">演示店铺-美国</div><div class="ac" style="right:8px;color:#1a8cf5">移除</div><div class="pl" style="left:0;top:47px;width:570px"></div></div>
<div class="row" style="left:0;top:279px;width:570px"><div class="img"><svg width="34" height="34" viewBox="0 0 34 34"><use href="#fox"/></svg></div><div class="t1">演示标题</div><div class="t2"><span style="font-size:12.5px;letter-spacing:-0.04px;">ASIN</span><b><span style="font-size:12.5px;letter-spacing:0.15px;">BC9995EC7C</span></b><i><span style="font-size:12.5px;letter-spacing:-0.28px;">MSKU</span></i><em><span style="font-size:12.5px;letter-spacing:-0.41px;">M</span></em><svg style="display:inline-block;margin-left:6px;vertical-align:1px" width="10" height="6" viewBox="0 0 10 6"><path d="M.7.800L5 5.100l4.300-4.300" fill="none" stroke="#808080" stroke-width="1.100"/></svg></div><div class="st" style="left:348px">演示店铺-美国</div><div class="ac" style="right:8px;color:#1a8cf5">移除</div><div class="pl" style="left:0;top:47px;width:570px"></div></div>
<div class="row" style="left:0;top:327px;width:570px"><div class="img"><svg width="34" height="34" viewBox="0 0 34 34"><use href="#fox"/></svg></div><div class="t1">演示标题</div><div class="t2"><span style="font-size:12.5px;letter-spacing:-0.04px;">ASIN</span><b><span style="font-size:12.5px;letter-spacing:0.36px;">BF6453G9C0</span></b><i><span style="font-size:12.5px;letter-spacing:-0.28px;">MSKU</span></i><em><span style="font-size:12.5px;letter-spacing:-0.41px;">M</span></em><svg style="display:inline-block;margin-left:6px;vertical-align:1px" width="10" height="6" viewBox="0 0 10 6"><path d="M.7.800L5 5.100l4.300-4.300" fill="none" stroke="#808080" stroke-width="1.100"/></svg></div><div class="st" style="left:348px">演示店铺-美国</div><div class="ac" style="right:8px;color:#1a8cf5">移除</div><div class="pl" style="left:0;top:47px;width:570px"></div></div>
<div class="row" style="left:0;top:375px;width:570px"><div class="img"><svg width="34" height="34" viewBox="0 0 34 34"><use href="#fox"/></svg></div><div class="t1">演示标题</div><div class="t2"><span style="font-size:12.5px;letter-spacing:-0.04px;">ASIN</span><b><span style="font-size:12.5px;letter-spacing:0.40px;">B7FGF96699</span></b><i><span style="font-size:12.5px;letter-spacing:-0.28px;">MSKU</span></i><em><span style="font-size:12.5px;letter-spacing:-0.41px;">M</span></em><svg style="display:inline-block;margin-left:6px;vertical-align:1px" width="10" height="6" viewBox="0 0 10 6"><path d="M.7.800L5 5.100l4.300-4.300" fill="none" stroke="#808080" stroke-width="1.100"/></svg></div><div class="st" style="left:348px">演示店铺-德国</div><div class="ac" style="right:8px;color:#1a8cf5">移除</div><div class="pl" style="left:0;top:47px;width:570px"></div></div>
<div class="row" style="left:0;top:423px;width:570px"><div class="img"><svg width="34" height="34" viewBox="0 0 34 34"><use href="#fox"/></svg></div><div class="t1">演示标题</div><div class="t2"><span style="font-size:12.5px;letter-spacing:-0.04px;">ASIN</span><b><span style="font-size:12.5px;letter-spacing:0.70px;">B82C005751</span></b><i><span style="font-size:12.5px;letter-spacing:-0.28px;">MSKU</span></i><em><span style="font-size:12.5px;letter-spacing:-0.41px;">M</span></em><svg style="display:inline-block;margin-left:6px;vertical-align:1px" width="10" height="6" viewBox="0 0 10 6"><path d="M.7.800L5 5.100l4.300-4.300" fill="none" stroke="#808080" stroke-width="1.100"/></svg></div><div class="st" style="left:348px">演示店铺-加拿大</div><div class="ac" style="right:8px;color:#1a8cf5">移除</div><div class="pl" style="left:0;top:47px;width:570px"></div></div>
<div class="abs" style="left:572px;top:87px;width:6px;height:141px;border-radius:3px;background:#dcdde1"></div></div>
  </div>
  <div class="pl" style="left:0;top:677px;width:1200px"></div>
  <div class="abs" style="left:1054px;top:686px;width:56px;height:32px;border:1px solid #d9dce3;border-radius:4px;font-size:12px;line-height:30px;text-align:center;color:#333">取消</div>
  <div class="abs" style="left:1124px;top:686px;width:56px;height:32px;border-radius:4px;background:#1a8cf5;font-size:12px;line-height:32px;text-align:center;color:#fff;font-weight:700">确定</div>
</div>
<div id="guide">
  <div class="bd" style="left:670px;top:236.500px">1</div>
  <div class="tip" style="left:707px;top:229px;width:184px;height:43px;line-height:48px">选择需要设置账号</div>
  <div class="bd" style="left:478px;top:296px">2</div>
  <div class="tip" style="left:515px;top:288px;width:224px;height:43px;line-height:47px">支持快速筛选进行添加</div>
  <div class="bd" style="left:1258px;top:340.500px">3</div>
  <div class="tip" style="left:1295px;top:333px;width:244px;height:43px;line-height:47px">可移除不需要查看的产品</div>
  <div class="bd" style="left:1539px;top:819px">4</div>
  <div class="tip" style="left:1576px;top:812px;width:184px;height:43px;line-height:47px">点击【确定】完成</div>
</div>
</body>
</html>
